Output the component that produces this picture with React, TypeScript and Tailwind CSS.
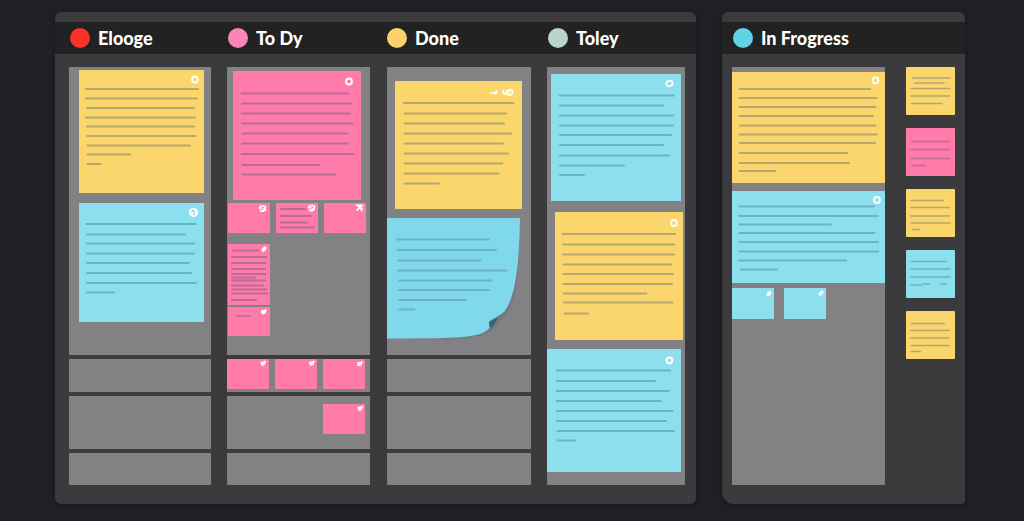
import React from "react";

type Line = [x1: number, x2: number, y: number];
type BadgeKind = "ring" | "wide" | "disc" | "dot" | "leaf" | "flower" | "cross" | "pair";
type Tone = "yellow" | "pink" | "blue";

const fills: Record<Tone, string> = {
  yellow: "bg-[#fbd66d]",
  pink: "bg-[#fe7baa]",
  blue: "bg-[#8cdfee]",
};

const strokes: Record<Tone, string> = {
  yellow: "stroke-[#b5a76e]",
  pink: "stroke-[#bb6c95]",
  blue: "stroke-[#70b3c0]",
};

function Badge({ kind, x, y }: { kind: BadgeKind; x: number; y: number }) {
  return (
    <g transform={`translate(${x} ${y})`} fill="none" stroke="#fffdf5" strokeLinecap="round">
      {kind === "ring" && <ellipse rx="2.9" ry="3.1" strokeWidth="2" />}
      {kind === "wide" && <ellipse rx="3.3" ry="2.6" strokeWidth="1.9" transform="rotate(-25)" />}
      {kind === "disc" && (
        <>
          <circle r="4.6" fill="#ffffff" stroke="none" />
          <path d="M-1.6 -1.2 Q-.4 -2.800 .5 -1.4 V2.4" stroke="#7fcfe0" strokeWidth="1.2" />
        </>
      )}
      {kind === "dot" && <path d="M-.8 .9 L.8 -.8" strokeWidth="3.6" />}
      {kind === "leaf" && <path d="M-1.4 -.6 Q-1 2.400 .8 .4 L2.2 -1.8 M-1.4 -1 H1.4 M-.6 1.200 L1.4 .2" strokeWidth="2.2" />}
      {kind === "flower" && (
        <>
          <path d="M-1 -2.4 Q-4 -1 -2 .4 Q-2.6 3 .2 2.6 Q3.4 2.4 2.4 0 Q3.6 -3 .8 -2.4" strokeWidth="1.9" strokeDasharray="3.2 2" />
          <path d="M-.6 -.6 L.8 .8" strokeWidth="1.4" />
        </>
      )}
      {kind === "cross" && <path d="M-3.2 -2.6 H3 M-1.4 -2.2 L2.4 2.4 M1.6 -2 L-2.6 2.2 M2.8 .2 L.6 -.4" strokeWidth="1.6" />}
      {kind === "pair" && (
        <>
          <path d="M-16.600 1.200 Q-15.200 -.8 -14 .6 T-11 .8 L-10.6 -1.6 M-13 -.2 H-10.8" strokeWidth="1.6" />
          <path d="M-4.4 -2.2 Q-4.6 1.2 -2.8 1.6 Q-.8 1.4 -1.2 -1.6" strokeWidth="1.8" />
          <ellipse cx="2.4" rx="2.6" ry="2.8" strokeWidth="1.8" />
          <path d="M2.2 -1.6 V1.6" strokeWidth="1" />
        </>
      )}
    </g>
  );
}

function Scribbles({ lines, tone, thin = false }: { lines: Line[]; tone: Tone; thin?: boolean }) {
  return (
    <g className={strokes[tone]} strokeWidth={thin ? 1.5 : 2} strokeLinecap="round">
      {lines.map(([x1, x2, y], i) => (
        <line key={i} x1={x1 + 0.5} x2={x2 - 0.5} y1={y + 0.1} y2={y - 0.1} />
      ))}
    </g>
  );
}

interface NoteProps {
  tone: Tone;
  size: [number, number];
  className: string;
  lines?: Line[];
  badge?: [BadgeKind, number, number];
  thin?: boolean;
}

function Note({ tone, size, className, lines = [], badge, thin }: NoteProps) {
  return (
    <article className={`shrink-0 ${fills[tone]} ${className}`}>
      <svg className="block h-full w-full" viewBox={`0 0 ${size[0]} ${size[1]}`} preserveAspectRatio="none" aria-hidden="true">
        <Scribbles lines={lines} tone={tone} thin={thin} />
        {badge && <Badge kind={badge[0]} x={badge[1]} y={badge[2]} />}
      </svg>
    </article>
  );
}

function CurledNote() {
  const lines: Line[] = [
    [9.5, 102.5, 21.5], [10, 109.5, 32], [10.5, 94.5, 42.5], [10.5, 120, 52.5],
    [11.5, 105, 62.5], [11.5, 102.5, 72], [11.5, 79.5, 82], [12, 28, 91.5],
  ];
  return (
    <article className="mr-2.5 mt-[9px] h-[122px] shrink-0">
      <svg className="block h-full w-full" viewBox="0 0 134 122" preserveAspectRatio="none" aria-hidden="true">
        <path d="M133 6 C132 50 130 82 119 96 C112 104 112 104 106 111 C98 119 76 121.500 48 121.500 L80 118 L118 90 Z" fill="#6a6c72" opacity=".5" />
        <path d="M0 0 H133 C132.500 36 130 78 117.500 93.500 C114 97 108 99 102 104 L103 109 C98 117 82 119 68 119.600 C46 120.800 20 120.300 0 120.500 Z" fill="#80d8eb" />
        <path d="M111 99.500 L102.500 103.500 Q101 105 102.500 106.500 Q101.500 108.500 103.500 110 Q108 107 111 99.500 Z" fill="#2f6880" />
        <Scribbles lines={lines} tone="blue" />
      </svg>
    </article>
  );
}

function Slot({ className, children }: { className: string; children?: React.ReactNode }) {
  return <div className={`flex flex-col bg-[#828285] ${className}`}>{children}</div>;
}

function EmptySlots() {
  return (
    <>
      <Slot className="h-[33px]" />
      <Slot className="h-[53px]" />
      <Slot className="h-8" />
    </>
  );
}

function Heading({ dot, children }: { dot: string; children: string }) {
  return (
    <h2 className="flex items-center gap-2 whitespace-nowrap pl-px font-['Lato',sans-serif] text-lg font-black leading-6 text-white">
      <span className={`size-5 shrink-0 rounded-full ${dot}`} />
      {children}
    </h2>
  );
}

const mini: [number, number] = [42, 30];

const sideNotes: { tone: Tone; lines: Line[] }[] = [
  { tone: "yellow", lines: [[6, 44.5, 11], [8, 38.5, 16], [4.5, 44.5, 21.5], [4.5, 44.5, 29], [5, 36.5, 36.5]] },
  { tone: "pink", lines: [[5, 44.5, 13.5], [4.5, 44, 21.5], [5, 44.5, 30.5], [5, 19, 37.5]] },
  { tone: "yellow", lines: [[4.5, 38, 11.5], [4.5, 44, 18.5], [4, 44, 27], [4.5, 44.5, 34], [5.5, 14.5, 40.5]] },
  { tone: "blue", lines: [[5, 41, 11.5], [4.5, 44.5, 19], [4.5, 44.5, 27], [4.5, 16, 35], [17, 24, 34], [34, 41, 34]] },
  { tone: "yellow", lines: [[5, 39, 12.5], [4, 44, 19.5], [4, 43.5, 27], [4.5, 44, 34.5], [5, 15, 40.5]] },
];

export default function App() {
  return (
    <main className="grid min-h-screen grid-cols-[641fr_243fr] gap-x-[26px] bg-[#201f26] pb-[17px] pl-[55px] pr-[59px] pt-3">
      <section className="min-w-0 overflow-hidden rounded-md bg-[#3b3a3c] pb-[19px] pt-2.5 shadow-[0_1px_3px_#151418]">
        <header className="grid h-8 grid-cols-[142fr_143fr_145fr_138fr] items-center gap-4 bg-[#222222] pl-3.5 pr-[11px]">
          <Heading dot="bg-[#fb3229]">Elooge</Heading>
          <Heading dot="bg-[#fb86b6]">To Dy</Heading>
          <Heading dot="bg-[#fbd16b]">Done</Heading>
          <Heading dot="bg-[#b7d5c8]">Toley</Heading>
        </header>

        <div className="grid grid-cols-[142fr_143fr_145fr_138fr] gap-4 pl-3.5 pr-[11px] pt-[13px]">
          <div className="flex flex-col gap-1">
            <Slot className="h-72 gap-2.5 pl-2.5 pr-[7px] pt-[3px]">
              <Note
                tone="yellow" size={[125, 123]} className="h-[123px]" badge={["ring", 116, 9.5]}
                lines={[
                  [6.5, 119.5, 19], [6.5, 118.5, 28.5], [7.5, 115.5, 38], [6.5, 116.5, 47.5], [7.5, 115.5, 56.5],
                  [7.5, 117, 66], [8, 111.5, 75.5], [8, 51.5, 84.5], [8, 22, 94],
                ]}
              />
              <Note
                tone="blue" size={[125, 119]} className="h-[119px]" badge={["disc", 114.5, 9.5]}
                lines={[
                  [7, 117.5, 21], [7.5, 106.5, 31.5], [7.5, 116, 40.5], [7.5, 115.5, 50.5], [7.5, 110.5, 60],
                  [7.5, 113, 70], [7.5, 117.5, 80], [7.5, 35.5, 89.5],
                ]}
              />
            </Slot>
            <EmptySlots />
          </div>

          <div className="flex flex-col gap-1">
            <Slot className="h-72 pt-1">
              <Note
                tone="pink" size={[128, 129]} className="ml-1.5 mr-[9px] h-[129px]" badge={["ring", 116, 10.5]}
                lines={[
                  [8, 116, 22.5], [8.5, 118, 32.5], [8, 117.5, 42.5], [8.5, 120.5, 52.5], [9, 114.5, 62.5],
                  [8.5, 115.5, 72.5], [8, 121, 83], [9, 86.5, 94], [9, 103, 103.5],
                ]}
              />
              <div className="mt-[3px] flex gap-1.5 pl-px">
                <Note tone="pink" size={mini} className="h-[30px] w-[42px]" badge={["flower", 34.5, 5.5]} />
                <Note
                  tone="pink" size={mini} className="h-[30px] w-[42px]" badge={["flower", 35.5, 5]}
                  lines={[[4.5, 29.5, 6], [4, 35.5, 13], [4.5, 32, 19.5], [4.5, 38, 24.5]]}
                />
                <Note tone="pink" size={mini} className="h-[30px] w-[42px]" badge={["cross", 35.5, 5]} />
              </div>
              <div className="mt-[11px] flex flex-col gap-0.5 pl-px">
                <Note
                  tone="pink" size={[42, 61]} className="h-[61px] w-[42px]" badge={["dot", 36, 5]}
                  lines={[
                    [4.5, 31, 6.5], [3.5, 39, 13], [3.5, 38, 19], [3.5, 37.5, 25], [3.5, 38, 30], [3.5, 28, 33.5],
                    [3.5, 38, 36.5], [3.5, 35.5, 41.5], [3.5, 39, 45.5], [3.5, 40, 49.5], [3.5, 28.5, 56],
                  ]}
                />
                <Note tone="pink" size={[42, 29]} className="h-[29px] w-[42px]" thin badge={["leaf", 35.5, 5]} lines={[[8, 23, 9]]} />
              </div>
            </Slot>
            <Slot className="h-[33px]">
              <div className="flex gap-1.5">
                <Note tone="pink" size={mini} className="h-[30px] w-[42px]" badge={["leaf", 36, 4.5]} />
                <Note tone="pink" size={mini} className="h-[30px] w-[42px]" badge={["leaf", 36.5, 4.5]} />
                <Note tone="pink" size={mini} className="h-[30px] w-[42px]" badge={["leaf", 36.5, 5]} />
              </div>
            </Slot>
            <Slot className="h-[53px] items-end pr-[5px] pt-2">
              <Note tone="pink" size={mini} className="h-[30px] w-[42px]" badge={["leaf", 37, 4.5]} />
            </Slot>
            <Slot className="h-8" />
          </div>

          <div className="flex flex-col gap-1 pl-px">
            <Slot className="h-72 pt-3.5">
              <Note
                tone="yellow" size={[127, 128]} className="ml-2 mr-[9px] h-32" badge={["pair", 112.5, 11.5]}
                lines={[
                  [8.5, 119, 22], [9, 111.5, 32.5], [9, 109.5, 42.5], [9, 116.5, 52.5], [9, 108.5, 62.5],
                  [9, 113.5, 72.5], [9, 108, 82.5], [9, 104, 92.5], [9, 44.5, 102.5],
                ]}
              />
              <CurledNote />
            </Slot>
            <EmptySlots />
          </div>

          <Slot className="pt-[7px]">
            <Note
              tone="blue" size={[130, 127]} className="ml-1 mr-1 h-[127px]" badge={["wide", 118.5, 9.5]}
              lines={[
                [8, 123.5, 21.5], [8.5, 113, 31.5], [8.5, 122.5, 41.5], [8.5, 122.5, 51.5], [8.5, 121, 61],
                [8.5, 112.5, 71], [8.5, 119, 81.5], [8.5, 73.5, 91.5], [8.5, 33.5, 101],
              ]}
            />
            <Note
              tone="yellow" size={[128, 128]} className="ml-2 mr-0.5 mt-[11px] h-32" badge={["ring", 119, 11]}
              lines={[
                [7, 120.5, 22], [7.5, 120, 32.5], [7.5, 119.5, 42.5], [8, 117, 52.5], [8, 118.5, 62],
                [8, 117.5, 72], [8, 92, 81.5], [8.5, 118, 90.5], [9, 33.5, 101.5],
              ]}
            />
            <Note
              tone="blue" size={[134, 123]} className="mr-1 mt-[9px] h-[123px]" badge={["ring", 122.5, 11.5]}
              lines={[
                [9, 123.5, 21.5], [9.5, 108.5, 32], [9, 122.5, 42], [9, 114.5, 52], [9.5, 126, 62],
                [9.5, 119.5, 72], [10, 127.5, 82], [10, 29, 91.5],
              ]}
            />
          </Slot>
        </div>
      </section>

      <section className="min-w-0 overflow-hidden rounded-b rounded-t-md rounded-bl-xl bg-[#3b3a3c] pb-[19px] pt-2.5 shadow-[0_1px_3px_#151418]">
        <header className="flex h-8 items-center bg-[#222222] pl-2.5">
          <Heading dot="bg-[#62d2e6]">In Frogress</Heading>
        </header>
        <div className="flex gap-[21px] px-2.5 pt-[13px]">
          <Slot className="h-[418px] min-w-0 flex-1 pt-[5px]">
            <Note
              tone="yellow" size={[153, 111]} className="h-[111px]" badge={["ring", 143.5, 8.5]}
              lines={[
                [7, 139, 17], [7, 145, 26], [7, 144, 35], [7, 141.5, 44], [7.5, 144, 53.5],
                [7, 145.5, 62.5], [7.5, 143.5, 71], [7, 115.5, 81], [7, 117.5, 91], [7, 44, 99],
              ]}
            />
            <Note
              tone="blue" size={[153, 92]} className="mt-2 h-[92px]" badge={["ring", 145, 9]}
              lines={[
                [7, 142.5, 15.5], [6.5, 146.5, 25], [7, 99.5, 33.5], [7, 143, 42], [7, 146.5, 51],
                [7, 146.5, 60.5], [6.5, 114.5, 69.5], [8, 45.5, 78.5],
              ]}
            />
            <div className="mt-[5px] flex gap-2.5">
              <Note tone="blue" size={[42, 31]} className="h-[31px] w-[42px]" badge={["dot", 37, 5.5]} />
              <Note tone="blue" size={[42, 31]} className="h-[31px] w-[42px]" badge={["dot", 37, 5]} />
            </div>
          </Slot>
          <div className="flex w-[49px] shrink-0 flex-col gap-[13px]">
            {sideNotes.map((note, i) => (
              <Note key={i} tone={note.tone} size={[49, 48]} className="h-12 rounded-[1px]" lines={note.lines} thin />
            ))}
          </div>
        </div>
      </section>
    </main>
  );
}
